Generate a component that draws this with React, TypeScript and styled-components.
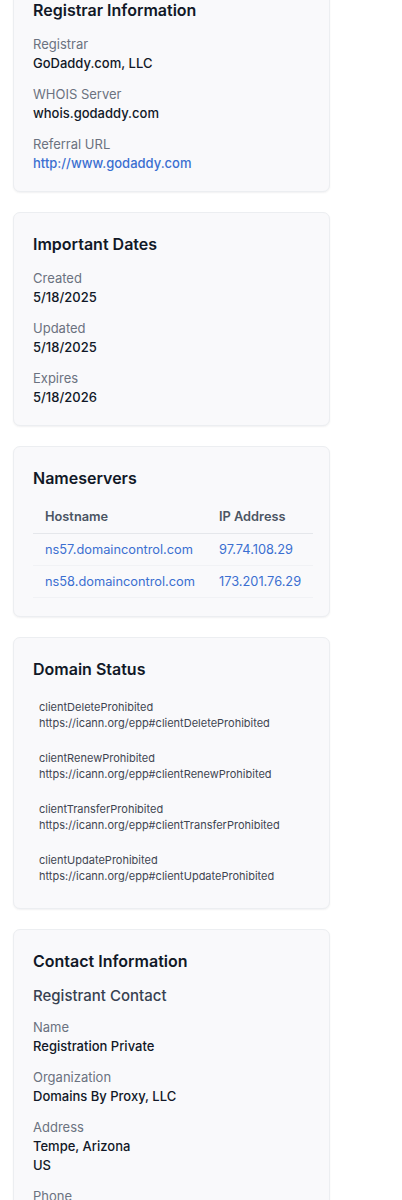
import styled, { createGlobalStyle } from "styled-components";

const GlobalStyle = createGlobalStyle`
  html, body {
    margin: 0;
    padding: 0;
    background: #ffffff;
  }
  body {
    font-family: Inter, "Noto Sans", "Liberation Sans", sans-serif;
    color: #111827;
    -webkit-font-smoothing: antialiased;
  }
`;

// page column, scrolled so the first card's top is just out of view
const Page = styled.main`
  display: flex;
  flex-direction: column;
  gap: 20px;
  width: 317px;
  margin: -22px 0 0 13px;
  padding-bottom: 40px;
`;

const Card = styled.section`
  background: #f9f9fb;
  border: 1px solid #eceef1;
  border-radius: 7px;
  box-shadow: 0 1px 2px rgba(17, 24, 39, 0.06);
  padding: 19px 19px 18px;
`;

const CardTitle = styled.h2`
  margin: 0 0 12px;
  font-size: 16px;
  line-height: 24px;
  font-weight: 600;
  color: #111827;
`;

const SubTitle = styled.h3`
  margin: 0 0 10px;
  font-size: 15px;
  line-height: 22px;
  font-weight: 500;
  color: #374151;
`;

const FieldList = styled.dl`
  display: flex;
  flex-direction: column;
  gap: 11px;
  margin: 0;
`;

const Field = styled.div`
  display: flex;
  flex-direction: column;
`;

const Label = styled.dt`
  font-size: 13px;
  line-height: 20px;
  color: #6b7280;
`;

const Value = styled.dd<{ $link?: boolean }>`
  margin: 0;
  font-size: 13px;
  line-height: 19px;
  font-weight: 500;
  color: ${(p) => (p.$link ? "#3b6fd1" : "#111827")};
  white-space: pre-line;
`;

const Table = styled.table`
  width: 100%;
  border-collapse: collapse;
  font-size: 12.8px;
`;

const Th = styled.th`
  text-align: left;
  padding: 7px 12px 8px;
  line-height: 16px;
  font-weight: 600;
  color: #4b5563;
  border-bottom: 1px solid #e5e7eb;
`;

const Td = styled.td`
  padding: 8px 12px;
  line-height: 15px;
  color: #3b6fd1;
  border-bottom: 1px solid #f1f2f5;
  white-space: nowrap;
`;

const StatusList = styled.ul`
  list-style: none;
  margin: 0;
  padding: 0;
  display: flex;
  flex-direction: column;
  gap: 7px;
`;

const StatusItem = styled.li`
  padding: 6px;
  font-size: 11px;
  line-height: 16px;
  color: #3f4652;
  display: flex;
  flex-direction: column;
`;

const registrar = [
  { label: "Registrar", value: "GoDaddy.com, LLC" },
  { label: "WHOIS Server", value: "whois.godaddy.com" },
  { label: "Referral URL", value: "http://www.godaddy.com", link: true },
];

const dates = [
  { label: "Created", value: "5/18/2025" },
  { label: "Updated", value: "5/18/2025" },
  { label: "Expires", value: "5/18/2026" },
];

const nameservers = [
  { host: "ns57.domaincontrol.com", ip: "97.74.108.29" },
  { host: "ns58.domaincontrol.com", ip: "173.201.76.29" },
];

const statuses = [
  "clientDeleteProhibited",
  "clientRenewProhibited",
  "clientTransferProhibited",
  "clientUpdateProhibited",
];

const registrant = [
  { label: "Name", value: "Registration Private" },
  { label: "Organization", value: "Domains By Proxy, LLC" },
  { label: "Address", value: "Tempe, Arizona\nUS" },
  { label: "Phone", value: "+1.4806242599" },
  { label: "Email", value: "Select Contact Domain Holder link at https://www.godaddy.com/whois" },
];

type Item = { label: string; value: string; link?: boolean };

const Fields = ({ items }: { items: Item[] }) => (
  <FieldList>
    {items.map((it) => (
      <Field key={it.label}>
        <Label>{it.label}</Label>
        <Value $link={it.link}>{it.value}</Value>
      </Field>
    ))}
  </FieldList>
);

export default function App() {
  return (
    <>
      <GlobalStyle />
      <Page>
        <Card>
          <CardTitle>Registrar Information</CardTitle>
          <Fields items={registrar} />
        </Card>

        <Card>
          <CardTitle>Important Dates</CardTitle>
          <Fields items={dates} />
        </Card>

        <Card>
          <CardTitle>Nameservers</CardTitle>
          <Table>
            <thead>
              <tr>
                <Th>Hostname</Th>
                <Th>IP Address</Th>
              </tr>
            </thead>
            <tbody>
              {nameservers.map((ns) => (
                <tr key={ns.host}>
                  <Td>{ns.host}</Td>
                  <Td>{ns.ip}</Td>
                </tr>
              ))}
            </tbody>
          </Table>
        </Card>

        <Card>
          <CardTitle>Domain Status</CardTitle>
          <StatusList>
            {statuses.map((s) => (
              <StatusItem key={s}>
                <span>{s}</span>
                <span>https://icann.org/epp#{s}</span>
              </StatusItem>
            ))}
          </StatusList>
        </Card>

        <Card>
          <CardTitle>Contact Information</CardTitle>
          <SubTitle>Registrant Contact</SubTitle>
          <Fields items={registrant} />
        </Card>
      </Page>
    </>
  );
}
